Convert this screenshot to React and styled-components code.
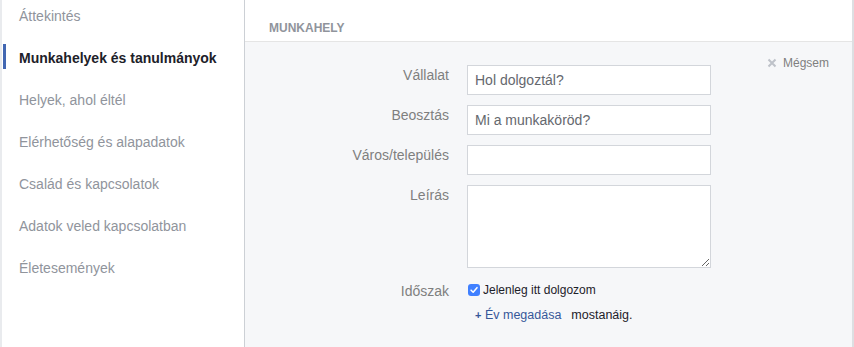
import React, { useState } from 'react';
import styled, { createGlobalStyle } from 'styled-components';

const GlobalStyle = createGlobalStyle`
  html, body {
    margin: 0;
    padding: 0;
    background: #fff;
  }
  body {
    font-family: "Liberation Sans", Arial, sans-serif;
    -webkit-font-smoothing: antialiased;
  }
`;

const NAV_ITEMS = [
  'Áttekintés',
  'Munkahelyek és tanulmányok',
  'Helyek, ahol éltél',
  'Elérhetőség és alapadatok',
  'Család és kapcsolatok',
  'Adatok veled kapcsolatban',
  'Életesemények',
];

const FIELDS = [
  { label: 'Vállalat', placeholder: 'Hol dolgoztál?' },
  { label: 'Beosztás', placeholder: 'Mi a munkaköröd?' },
  { label: 'Város/település', placeholder: '' },
];

const App = () => {
  const [active, setActive] = useState(1);
  const [current, setCurrent] = useState(true);

  return (
    <>
      <GlobalStyle />
      <Page>
        <Sidebar>
          {NAV_ITEMS.map((item, i) => (
            <NavItem key={item} active={i === active} onClick={() => setActive(i)}>
              {item}
            </NavItem>
          ))}
        </Sidebar>
        <Content>
          <SectionHeader>Munkahely</SectionHeader>
          <FormArea>
            <Cancel>
              <CloseIcon viewBox="0 0 10 10">
                <path d="M1.5 1.5 L8.5 8.5 M8.5 1.5 L1.5 8.5" />
              </CloseIcon>
              Mégsem
            </Cancel>
            <Form>
              {FIELDS.map((f) => (
                <Row key={f.label}>
                  <Label>{f.label}</Label>
                  <Input placeholder={f.placeholder} />
                </Row>
              ))}
              <Row>
                <Label>Leírás</Label>
                <TextArea />
              </Row>
              <Row spaced>
                <Label>Időszak</Label>
                <Period>
                  <CheckRow>
                    <CheckBox checked={current} onClick={() => setCurrent(!current)}>
                      {current && (
                        <svg viewBox="0 0 12 12" width="10" height="10">
                          <path d="M2.5 6.2 L5 8.6 L9.6 3.2" fill="none" stroke="#fff" strokeWidth="1.8" strokeLinecap="round" strokeLinejoin="round" />
                        </svg>
                      )}
                    </CheckBox>
                    Jelenleg itt dolgozom
                  </CheckRow>
                  <YearRow>
                    <AddYear>
                      <Plus>+</Plus> Év megadása
                    </AddYear>
                    <Until>mostanáig.</Until>
                  </YearRow>
                </Period>
              </Row>
            </Form>
          </FormArea>
        </Content>
      </Page>
    </>
  );
};

const Page = styled.div`
  display: flex;
  height: 347px;
  overflow: hidden;
  box-sizing: border-box;
  border-left: 2px solid #e9ebee;
  border-right: 2px solid #dddfe2;
`;

const Sidebar = styled.nav`
  width: 243px;
  flex-shrink: 0;
  border-right: 1px solid #ccd0d5;
  background: #fff;
  padding-top: 6px;
  box-sizing: border-box;
`;

const NavItem = styled.div`
  position: relative;
  height: 42px;
  line-height: 20px;
  padding-left: 17px;
  font-size: 14px;
  font-weight: ${(p) => (p.active ? 'bold' : 'normal')};
  color: ${(p) => (p.active ? '#1d2129' : '#90949c')};
  cursor: pointer;
  &::before {
    content: '';
    display: ${(p) => (p.active ? 'block' : 'none')};
    position: absolute;
    left: 1px;
    top: -4px;
    width: 3px;
    height: 25px;
    background: #4267b2;
  }
`;

const Content = styled.div`
  flex: 1;
  display: flex;
  flex-direction: column;
  background: #f6f7f9;
`;

const SectionHeader = styled.div`
  height: 42px;
  box-sizing: border-box;
  background: #fff;
  border-bottom: 1px solid #e5e5e5;
  padding: 21px 0 0 24px;
  font-size: 12px;
  font-weight: bold;
  text-transform: uppercase;
  color: #90949c;
`;

const FormArea = styled.div`
  position: relative;
  flex: 1;
  padding-top: 23px;
`;

const Cancel = styled.div`
  position: absolute;
  top: 14px;
  right: 23px;
  display: flex;
  align-items: center;
  gap: 6px;
  font-size: 12px;
  color: #7f7f7f;
  cursor: pointer;
`;

const CloseIcon = styled.svg`
  width: 10px;
  height: 10px;
  stroke: #bec2c9;
  stroke-width: 2;
`;

const Form = styled.div`
  display: flex;
  flex-direction: column;
  gap: 10px;
`;

const Row = styled.div`
  display: flex;
  align-items: flex-start;
  gap: 18px;
  margin-top: ${(p) => (p.spaced ? '3px' : '0')};
`;

const Label = styled.div`
  width: 204px;
  text-align: right;
  font-size: 14px;
  line-height: 20px;
  color: #7f7f7f;
`;

const Input = styled.input`
  width: 244px;
  height: 30px;
  box-sizing: border-box;
  border: 1px solid #d3d6db;
  background: #fff;
  padding: 0 7px;
  font-family: inherit;
  font-size: 14px;
  color: #1d2129;
  outline: none;
  &::placeholder {
    color: #65686e;
  }
`;

const TextArea = styled.textarea`
  width: 244px;
  height: 83px;
  box-sizing: border-box;
  border: 1px solid #d3d6db;
  background: #fff;
  font-family: inherit;
  font-size: 14px;
  outline: none;
  margin: 0;
`;

const Period = styled.div`
  display: flex;
  flex-direction: column;
  gap: 11px;
  padding-top: 2px;
`;

const CheckRow = styled.label`
  display: flex;
  align-items: center;
  gap: 3px;
  font-size: 12px;
  color: #1d2129;
  cursor: pointer;
`;

const CheckBox = styled.span`
  width: 12px;
  height: 12px;
  border-radius: 3px;
  margin-left: 1px;
  display: flex;
  align-items: center;
  justify-content: center;
  background: ${(p) => (p.checked ? '#4080ff' : '#fff')};
  border: ${(p) => (p.checked ? 'none' : '1px solid #bec2c9')};
`;

const YearRow = styled.div`
  display: flex;
  align-items: center;
  gap: 10px;
  padding-left: 8px;
  font-size: 12.5px;
`;

const AddYear = styled.span`
  color: #365899;
  cursor: pointer;
`;

const Plus = styled.span`
  font-weight: bold;
  font-size: 11px;
`;

const Until = styled.span`
  color: #1d2129;
`;

export default App;
